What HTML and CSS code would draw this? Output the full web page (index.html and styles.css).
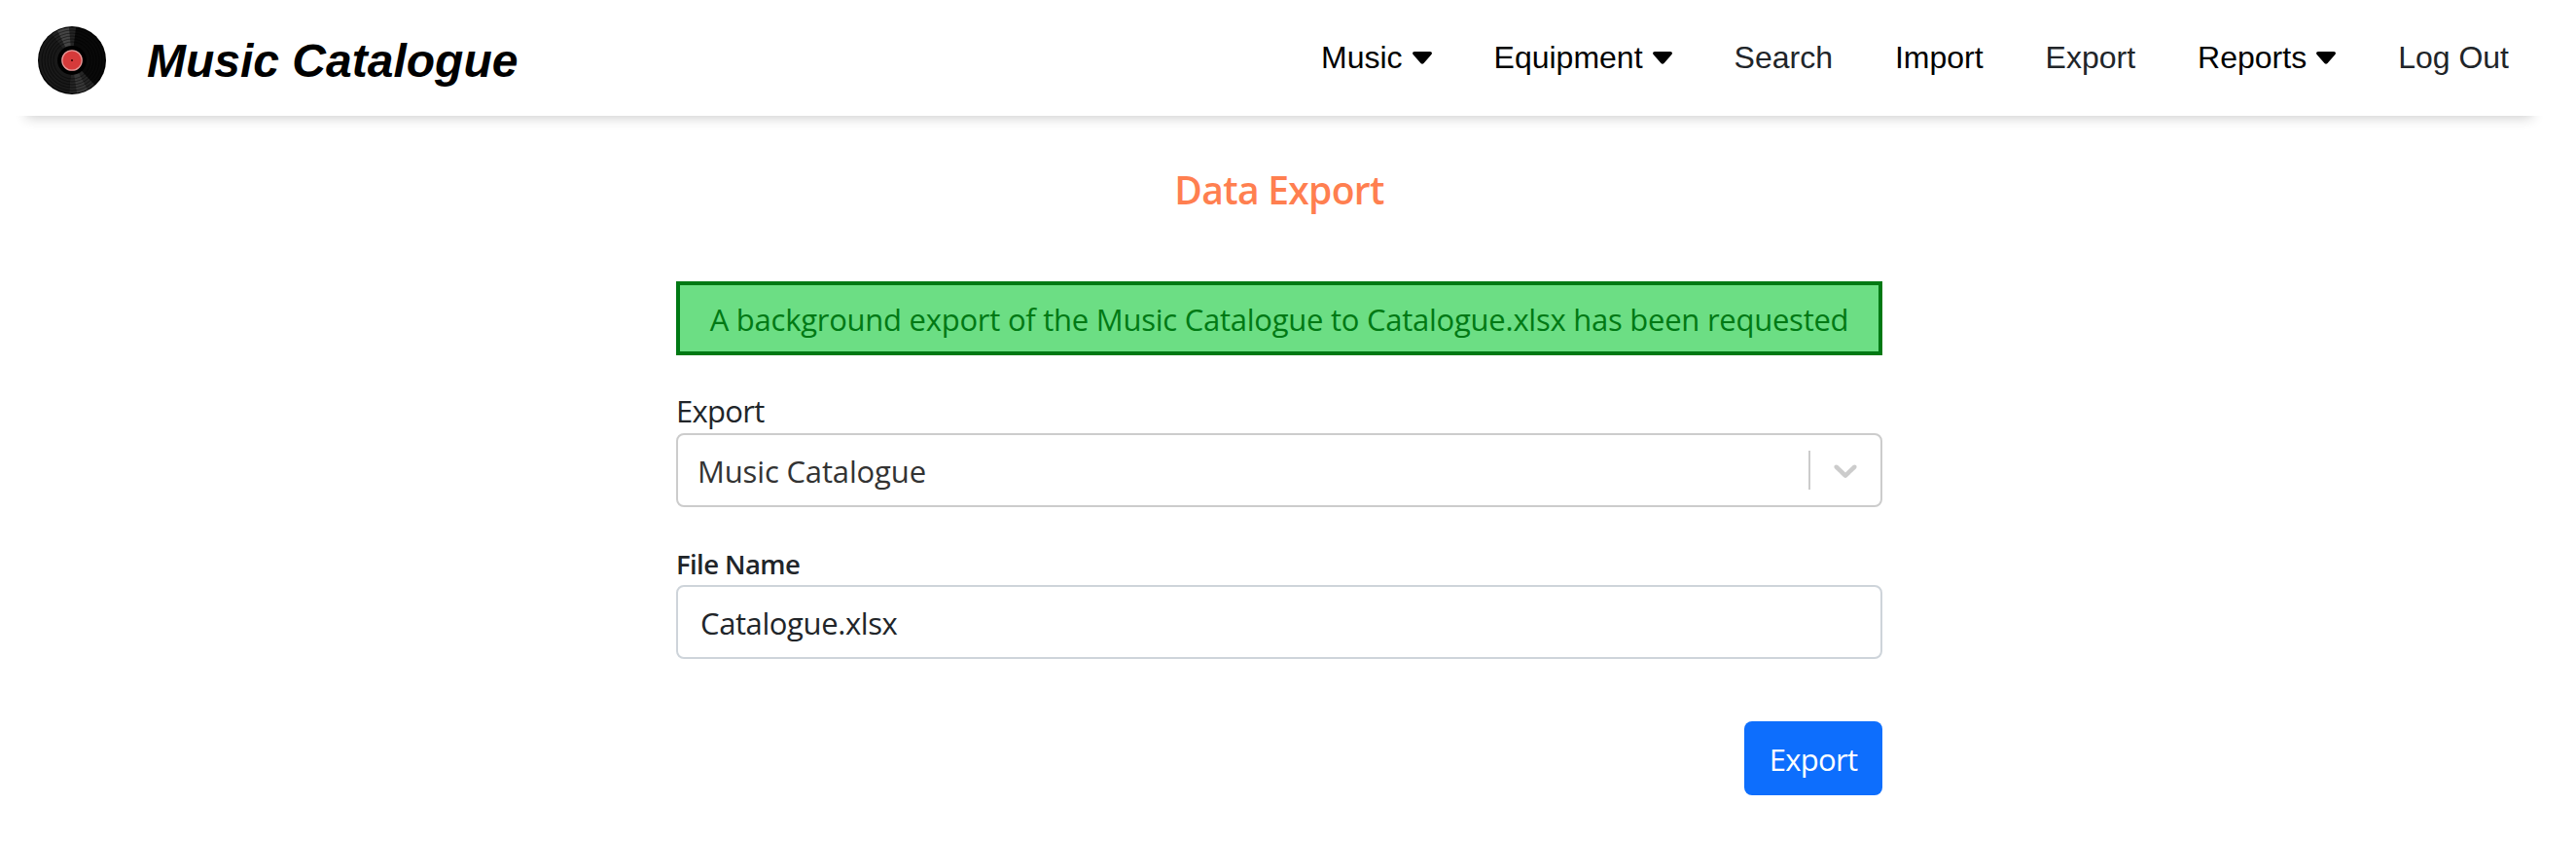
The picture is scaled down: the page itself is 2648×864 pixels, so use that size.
FILE: index.html
```html
<!DOCTYPE html>
<html lang="en">
<head>
<meta charset="utf-8">
<title>Music Catalogue</title>
<link rel="stylesheet" href="styles.css">
</head>
<body>
<div class="page">
  <header class="header">
    <svg class="logo" viewBox="0 0 70 70">
      <circle cx="35" cy="35" r="35" fill="#000"/>
      <circle cx="35" cy="35" r="33.600" fill="#090909"/>
      <path d="M35 35L14 8A34 34 0 0 1 39 1.500Z" fill="#3b3b3b" opacity=".55"/>
      <path d="M35 35L20 4.500A34 34 0 0 1 32 1.500Z" fill="#666" opacity=".5"/>
      <path d="M35 35L32 68.500A34 34 0 0 0 58 60Z" fill="#393939" opacity=".6"/>
      <path d="M35 35L40 68.500A34 34 0 0 0 51 65Z" fill="#555" opacity=".4"/>
      <path d="M35 35L14 8A34 34 0 0 0 32 68.500Z" fill="#222" opacity=".65"/>
      <g fill="none" stroke="#000" stroke-width=".8" opacity=".6">
        <circle cx="35" cy="35" r="31"/><circle cx="35" cy="35" r="28"/><circle cx="35" cy="35" r="25"/>
        <circle cx="35" cy="35" r="22"/><circle cx="35" cy="35" r="19"/>
      </g>
      <circle cx="35" cy="35" r="15" fill="#000"/>
      <circle cx="35" cy="35" r="10.200" fill="#d63a3a" stroke="#e99a9a" stroke-width="1.300"/>
      <circle cx="35" cy="35" r="1" fill="#300"/>
    </svg>
    <span class="brand">Music Catalogue</span>
    <nav class="nav">
      <a class="link strong">Music<svg class="caret" viewBox="0 0 20 13"><path d="M2 0H18Q20 0 20 1.800Q20 2.600 19 3.600L11.500 12Q10 13.400 8.500 12L1 3.600Q0 2.600 0 1.800Q0 0 2 0Z"/></svg></a>
      <a class="link strong">Equipment<svg class="caret" viewBox="0 0 20 13"><path d="M2 0H18Q20 0 20 1.800Q20 2.600 19 3.600L11.500 12Q10 13.400 8.500 12L1 3.600Q0 2.600 0 1.800Q0 0 2 0Z"/></svg></a>
      <a class="link">Search</a>
      <a class="link strong">Import</a>
      <a class="link">Export</a>
      <a class="link strong">Reports<svg class="caret" viewBox="0 0 20 13"><path d="M2 0H18Q20 0 20 1.800Q20 2.600 19 3.600L11.500 12Q10 13.400 8.500 12L1 3.600Q0 2.600 0 1.800Q0 0 2 0Z"/></svg></a>
      <a class="link">Log Out</a>
    </nav>
  </header>
  <main class="content">
    <h5 class="title">Data Export</h5>
    <div class="alert">A background export of the Music Catalogue to Catalogue.xlsx has been requested</div>
    <div class="label">Export</div>
    <div class="field select">
      <span class="value">Music Catalogue</span>
      <i class="separator"></i>
      <svg class="chevron" viewBox="0 0 20 20"><path d="M4.516 7.548c0.436-0.446 1.043-0.481 1.576 0l3.908 3.747 3.908-3.747c0.533-0.481 1.141-0.446 1.574 0 0.436 0.445 0.408 1.197 0 1.615-0.406 0.418-4.695 4.502-4.695 4.502-0.217 0.223-0.502 0.335-0.787 0.335s-0.570-0.112-0.789-0.335c0 0-4.287-4.084-4.695-4.502s-0.436-1.170 0-1.615z"/></svg>
    </div>
    <div class="label small">File Name</div>
    <div class="field input">Catalogue.xlsx</div>
    <div class="actions"><button class="button">Export</button></div>
  </main>
</div>
</body>
</html>
```
FILE: styles.css
```css
* { box-sizing: border-box; }
body { margin: 0; background: #fff; color: #212529; font: 31px/48px "Open Sans", "Noto Sans", sans-serif; letter-spacing: -0.7px; }
.page { width: 2630px; }
.header { display: flex; align-items: flex-start; height: 119px; padding: 27px 51px 0 39px; background: #fff; box-shadow: 0 29px 12px -27px rgba(0, 0, 0, 0.2); font-family: "Liberation Sans", Arial, sans-serif; letter-spacing: 0; }
.logo { width: 70px; height: 70px; }
.brand { margin: 12px 0 0 42px; color: #000; font-size: 48px; font-weight: 700; font-style: italic; }
.nav { display: flex; gap: 64px; margin: 8px 0 0 auto; font-size: 32px; }
.link { display: flex; align-items: center; white-space: nowrap; }
.strong { color: #000; }
.caret { width: 20px; height: 13px; margin: 1px 0 0 10px; }
.content { width: 1240px; margin: 0 auto; }
.title { margin: 52px 0 70px; color: #ff7f50; font-size: 39px; font-weight: 600; text-align: center; }
.alert { display: flex; align-items: center; justify-content: center; height: 76px; padding-top: 2px; border: 4px solid #007914; background: #6cde84; color: #007914; letter-spacing: -0.25px; white-space: nowrap; }
.label { height: 48px; margin-top: 32px; padding-top: 1px; }
.small { padding-top: 3px; font-size: 27.5px; font-weight: 600; letter-spacing: -0.6px; }
.field { display: flex; align-items: center; height: 76px; border: 2px solid #ccc; border-radius: 8px; }
.select { padding-left: 20px; color: #333; letter-spacing: -0.15px; }
.value { margin-right: auto; padding-top: 2px; }
.separator { width: 2px; height: 40px; background: #ccc; }
.chevron { width: 40px; height: 40px; margin: 0 16px; fill: #ccc; }
.input { padding: 2px 23px 0; border-color: #ced4da; letter-spacing: -0.4px; }
.actions { display: flex; justify-content: flex-end; margin-top: 64px; }
.button { width: 142px; height: 76px; padding: 2px 0 0; border: 0; border-radius: 8px; background: #0d6efd; color: #fff; font: inherit; letter-spacing: inherit; }
```
